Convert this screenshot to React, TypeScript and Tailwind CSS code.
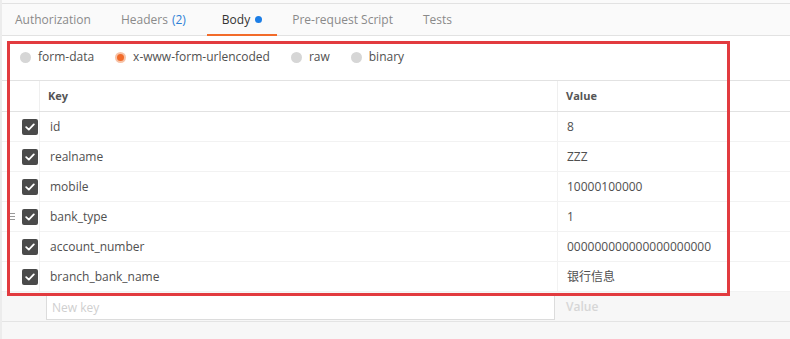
import React from "react";

const rows = [
  { k: "id", v: "8" },
  { k: "realname", v: "ZZZ" },
  { k: "mobile", v: "10000100000" },
  { k: "bank_type", v: "1", handle: true },
  { k: "account_number", v: "000000000000000000000" },
  { k: "branch_bank_name", v: "银行信息" },
];

function Check() {
  return (
    <div className="w-[16px] h-[16px] rounded-[2px] bg-[#4a4a4a] flex items-center justify-center">
      <svg width="10" height="8" viewBox="0 0 10 8">
        <path d="M1.2 4.2 L3.8 6.6 L8.8 1.4" fill="none" stroke="#fff" strokeWidth="1.8" strokeLinecap="round" strokeLinejoin="round" />
      </svg>
    </div>
  );
}

function Radio({ on }: { on?: boolean }) {
  return on ? (
    <div className="w-[11px] h-[11px] rounded-full bg-[#f7c3a8] flex items-center justify-center">
      <div className="w-[7px] h-[7px] rounded-full bg-[#f26b2a]" />
    </div>
  ) : (
    <div className="w-[11px] h-[11px] rounded-full bg-[#d6d6d6]" />
  );
}

export default function App() {
  return (
    <div
      className="w-[790px] h-[339px] bg-[#f7f7f7] relative overflow-hidden border-l-2 border-[#ececec] text-[12px] text-[#505050]"
      style={{ fontFamily: '"Open Sans", "Noto Sans CJK SC", sans-serif' }}
    >
      <div className="h-[3px] bg-[#fafafa]" />
      {/* Tabs */}
      <div className="h-[33px] bg-[#fafafa] border-t border-b border-[#e2e2e2] flex text-[12px] text-[#8a8a8a]">
        <div className="px-[13px] flex items-center">Authorization</div>
        <div className="px-[15px] flex items-center ml-[2px]">
          Headers <span className="text-[#2d7fd6] ml-[4px]">(2)</span>
        </div>
        <div className="px-[15px] flex items-center ml-[6px] relative text-[#333]">
          Body
          <span className="ml-[5px] w-[7px] h-[7px] rounded-full bg-[#1c7ee6] inline-block" />
          <div className="absolute left-0 right-0 bottom-[-1px] h-[2px] bg-[#f26b2a]" />
        </div>
        <div className="px-[15px] flex items-center">Pre-request Script</div>
        <div className="px-[15px] flex items-center">Tests</div>
      </div>

      {/* Body panel */}
      <div className="bg-white">
        <div className="h-[44px] flex items-center pl-[18px] gap-0 pb-[2px]">
          <div className="flex items-center gap-[7px] mr-[21px]">
            <Radio />
            <span>form-data</span>
          </div>
          <div className="flex items-center gap-[7px] mr-[21px]">
            <Radio on />
            <span>x-www-form-urlencoded</span>
          </div>
          <div className="flex items-center gap-[7px] mr-[21px]">
            <Radio />
            <span>raw</span>
          </div>
          <div className="flex items-center gap-[7px]">
            <Radio />
            <span>binary</span>
          </div>
        </div>

        {/* Header */}
        <div className="flex h-[32px] border-t border-b border-[#e2e2e2] text-[11px] font-bold text-[#555]">
          <div className="w-[38px] border-r border-[#efefef]" />
          <div className="w-[518px] border-r border-[#efefef] flex items-center pl-[8px]">Key</div>
          <div className="flex-1 flex items-center pl-[8px]">Value</div>
        </div>

        {rows.map((r) => (
          <div key={r.k} className="flex h-[30px] border-b border-[#f2f2f2]">
            <div className="w-[38px] border-r border-[#f2f2f2] flex items-center justify-end pr-[1px] relative">
              {r.handle && (
                <div className="absolute left-[8px] top-[11px] flex flex-col gap-[2px]">
                  <div className="w-[5px] h-[1px] bg-[#999]" />
                  <div className="w-[5px] h-[1px] bg-[#999]" />
                  <div className="w-[5px] h-[1px] bg-[#999]" />
                </div>
              )}
              <Check />
            </div>
            <div className="w-[518px] border-r border-[#f2f2f2] flex items-center pl-[10px]">{r.k}</div>
            <div className="flex-1 flex items-center pl-[9px]">{r.v}</div>
          </div>
        ))}
      </div>

      {/* New key row */}
      <div className="flex h-[30px] bg-[#f7f7f7] border-b border-[#e4e4e4]">
        <div className="w-[44px]" />
        <div className="w-[509px] h-[25px] mt-[3px] bg-white border border-[#dcdcdc] flex items-center pl-[5px] text-[#cfcfcf]">
          New key
        </div>
        <div className="flex-1 flex items-center pl-[11px] text-[#d6d6d6] font-semibold">Value</div>
      </div>

      {/* Red annotation box */}
      <div className="absolute left-[5px] top-[41px] w-[723px] h-[255px] border-[3px] border-[#e23b3f] pointer-events-none" />
    </div>
  );
}
